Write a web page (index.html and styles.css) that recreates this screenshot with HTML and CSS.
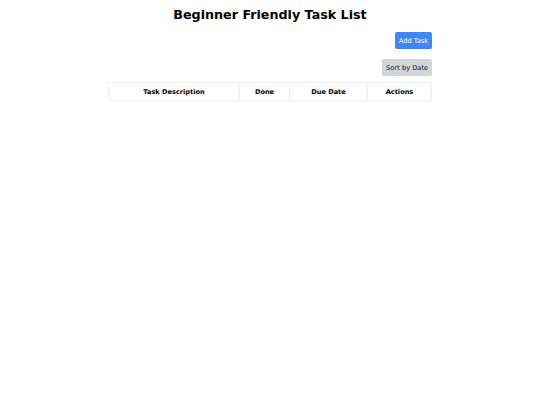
FILE: index.html
```html
<!DOCTYPE html>
<html>
<head>
<meta charset="utf-8">
<link rel="stylesheet" href="styles.css">
</head>
<body>
<div class="app">
  <h1 class="title">Beginner Friendly Task List</h1>
  <div class="toolbar">
    <button class="btn btn-add">Add Task</button>
  </div>
  <div class="toolbar">
    <button class="btn btn-sort">Sort by Date</button>
  </div>
  <table class="tasks">
    <thead>
      <tr>
        <th class="c1">Task Description</th>
        <th class="c2">Done</th>
        <th class="c3">Due Date</th>
        <th class="c4">Actions</th>
      </tr>
    </thead>
    <tbody></tbody>
  </table>
</div>
</body>
</html>
```
FILE: styles.css
```css
html, body {
  margin: 0;
  padding: 0;
  background: #ffffff;
  font-family: "DejaVu Sans", Verdana, sans-serif;
  color: #000;
}
.app {
  width: 324px;
  margin: 0 auto;
  padding-top: 6px;
}
.title {
  margin: 0;
  font-size: 12.7px;
  font-weight: bold;
  text-align: center;
  line-height: 17px;
}
.toolbar {
  display: flex;
  justify-content: flex-end;
}
.btn {
  font-family: "DejaVu Sans", Verdana, sans-serif;
  font-size: 6.7px;
  border: none;
  border-radius: 2px;
  padding: 0 3.8px;
  height: 17px;
  cursor: pointer;
}
.btn-add {
  margin-top: 9px;
  background: #4285f4;
  color: #fff;
}
.btn-sort {
  margin-top: 10px;
  background: #d1d5db;
  color: #111;
}
.tasks {
  margin-top: 6px;
  width: 323px;
  border-collapse: collapse;
  font-size: 6.6px;
  table-layout: fixed;
}
.tasks th {
  box-sizing: border-box;
  border: 1px solid #eeeeee;
  height: 18px;
  padding: 0 4px;
  font-weight: bold;
  text-align: center;
}
.c1 { width: 131px; }
.c2 { width: 50px; }
.c3 { width: 78px; }
.c4 { width: 64px; }
```
